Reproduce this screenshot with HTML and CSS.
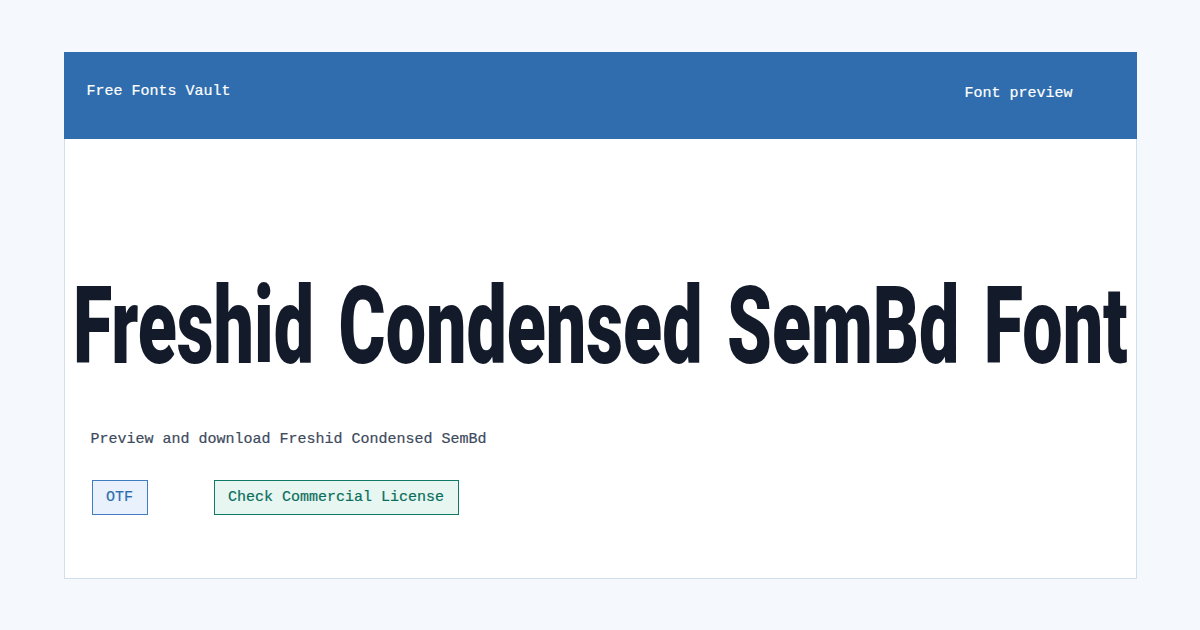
FILE: index.html
```html
<!doctype html>
<html lang="en">
<head>
<meta charset="utf-8">
<meta name="viewport" content="width=device-width, initial-scale=1">
<title>Freshid Condensed SemBd Font - Free Fonts Vault</title>
<link rel="stylesheet" href="styles.css">
</head>
<body>

<div class="card">

	<header class="bar">
		<span class="brand">Free Fonts Vault</span>
		<span class="crumb">Font preview</span>
	</header>

	<main class="sheet">

		<h1 class="specimen"><span class="specimen-text">Freshid Condensed SemBd Font</span></h1>

		<p class="lede">Preview and download Freshid Condensed SemBd</p>

		<p class="actions">
			<a class="tag tag-format">OTF</a>
			<a class="tag tag-license">Check Commercial License</a>
		</p>

	</main>

</div>

</body>
</html>
```

FILE: styles.css
```css
* { box-sizing: border-box; }

html { background: #f5f9fd; }

/* regular mono with a hair of stroke, between regular and bold */
body { margin: 0; font: 15px "Liberation Mono", "DejaVu Sans Mono", monospace; -webkit-text-stroke: 0.2px currentColor; }

a { text-decoration: none; }

.card { background: #fff; border: 1px solid #d3deec; margin: 52px auto 0; width: 1073px; height: 527px; }

.bar { align-items: center; background: #2f6dae; color: #fff; display: flex; height: 87px;
	justify-content: space-between; margin: -1px -1px 0; padding: 0 64px 4px 23px; }
.brand { position: relative; top: -2px; }

.sheet { padding: 0 26px; }

/* the big specimen line is wider than the card, so it is squeezed about its centre */
.specimen { color: #131a2a; display: flex; font: 900 108px/1 Roboto, sans-serif; justify-content: center;
	margin: 133px 0 0; white-space: nowrap; word-spacing: 10px; -webkit-text-stroke: 0; }
.specimen-text { flex: none; transform: scaleX( 0.664 ); }

.lede { color: #3d4a5c; margin: 51px 0 0; }

.actions { display: flex; gap: 66px; margin: 32px 0 0 1px; }

.tag { border: 1px solid; display: block; line-height: 33px; padding: 0 13.5px; }
.tag-format { background: #e9f2fc; border-color: #3f7cc0; color: #2f6dae; }
.tag-license { background: #e7f6f1; border-color: #0f7a66; color: #0b6e5c; }
```
